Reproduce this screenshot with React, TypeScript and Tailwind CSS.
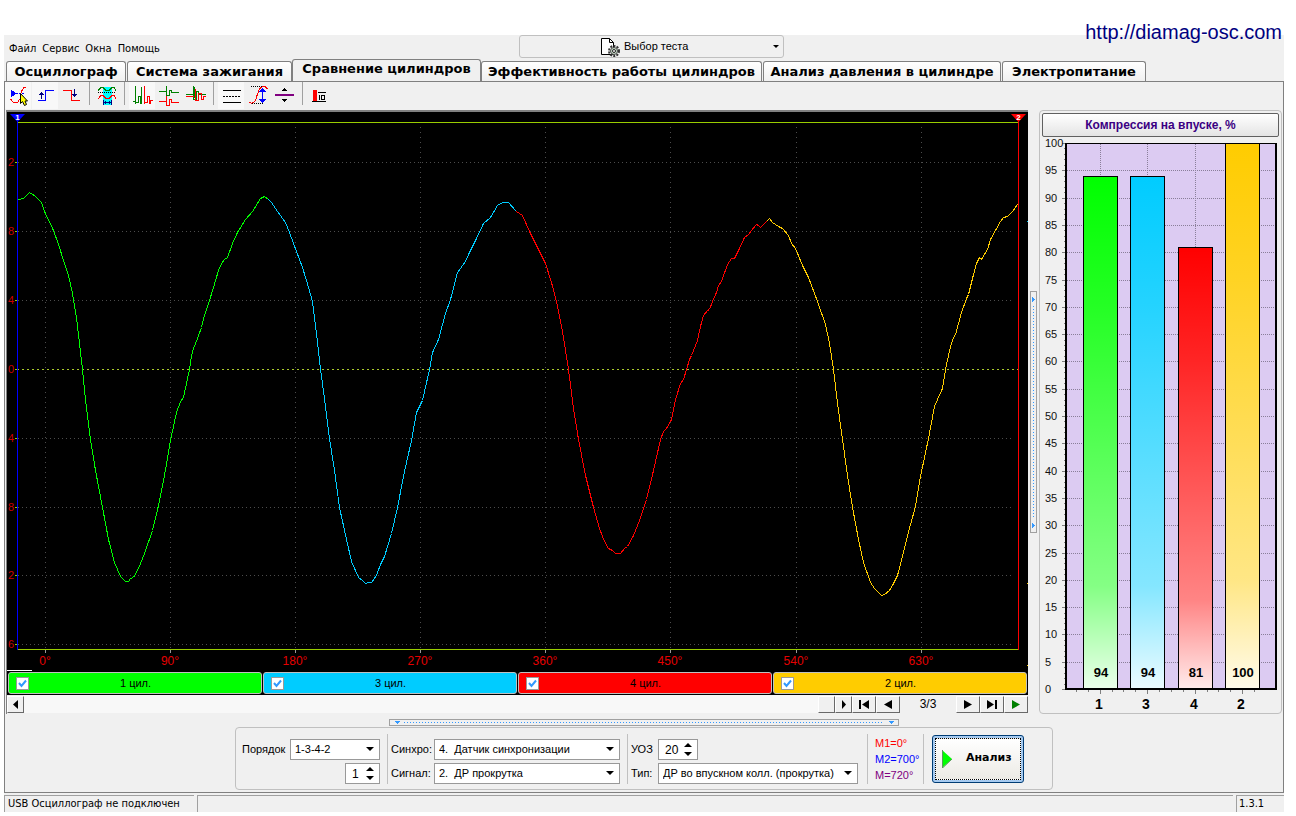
import { ReactNode } from "react"
import clsx from "clsx"

const ui = "font-['Liberation_Sans',Arial,sans-serif]"
const tahoma = "font-['DejaVu_Sans_Condensed','DejaVu_Sans',Tahoma,sans-serif]"

const menu = ["Файл", "Сервис", "Окна", "Помощь"]

const tabs = [
  { label: "Осциллограф", width: "w-[120px]" },
  { label: "Система зажигания", width: "w-[165px]" },
  { label: "Сравнение цилиндров", width: "w-[189px]", active: true },
  { label: "Эффективность работы цилиндров", width: "w-[281px]" },
  { label: "Анализ давления в цилиндре", width: "w-[238px]" },
  { label: "Электропитание", width: "w-[144px]" },
]

const cylinders = [
  { label: "1 цил.", bg: "bg-[#00ff00]" },
  { label: "3 цил.", bg: "bg-[#00ccff]" },
  { label: "4 цил.", bg: "bg-[#ff0000]" },
  { label: "2 цил.", bg: "bg-[#ffcc00]" },
]

const traces = [
  {
    color: "#00ff00",
    points:
      "18,199 23,198 29,192 32,194 34,195 41,202 44,211 53,230 58,244 64,263 68,275 72,293 76,317 79,343 82,369 85,399 90,439 95,470 102,507 108,539 114,562 120,576 123,579 125,581 128,581 130,578 133,577 138,568 144,553 152,530 158,505 164,475 170,440 176,412 180,401 183,397 189,369 191,355 193,348 197,338 201,327 204,315 209,300 213,287 218,270 221,263 224,259 227,257 232,243 237,232 245,219 252,211 260,198 264,196 268,199",
  },
  {
    color: "#00ccff",
    points:
      "268,199 271,202 277,211 285,222 289,232 296,251 302,267 306,280 312,301 316,333 320,369 324,398 329,438 334,470 339,507 346,539 351,561 358,577 362,580 365,583 368,582 371,582 376,575 380,564 384,556 391,533 397,507 404,471 411,440 416,412 422,400 429,369 432,352 438,339 445,313 450,299 457,272 465,261 468,254 475,240 483,223 490,217 497,205 502,202 508,202 516,211",
  },
  {
    color: "#ff0000",
    points:
      "516,211 522,215 529,231 536,245 545,263 551,282 556,301 562,331 568,369 573,408 578,439 585,475 593,507 599,528 604,541 608,548 612,550 615,553 620,553 624,548 627,546 633,535 639,520 646,499 653,470 660,439 663,431 666,428 671,419 675,399 680,383 683,379 689,359 691,355 697,340 700,326 703,315 707,310 709,309 712,301 716,292 718,285 721,281 727,264 731,258 734,258 739,248 744,237 748,234 751,230 756,224 758,225 760,227 766,221",
  },
  {
    color: "#ffcc00",
    points:
      "766,221 769,218 772,222 778,226 782,228 788,235 791,243 795,248 802,265 808,277 817,301 825,324 829,343 833,369 837,403 842,439 847,475 852,507 858,539 863,562 870,582 874,588 881,595 884,594 889,590 892,585 897,575 904,548 910,524 915,506 920,476 928,438 934,406 937,399 942,388 946,364 950,346 953,337 955,334 961,312 966,298 968,294 972,278 976,263 979,257 981,259 987,249 990,239 995,230 1000,221 1003,217 1007,216 1012,211 1017,204",
  },
]

const angles = [
  { x: 45, label: "0°" },
  { x: 170, label: "90°" },
  { x: 295, label: "180°" },
  { x: 420, label: "270°" },
  { x: 545, label: "360°" },
  { x: 670, label: "450°" },
  { x: 796, label: "540°" },
  { x: 921, label: "630°" },
]

const levels = [
  { y: 162, label: "2" },
  { y: 231, label: "8" },
  { y: 300, label: "4" },
  { y: 369, label: "0" },
  { y: 438, label: "4" },
  { y: 507, label: "8" },
  { y: 575, label: "2" },
  { y: 644, label: "6" },
]

function Scope() {
  return (
    <svg viewBox="7 112 1021 559" className={clsx("block w-full bg-black", ui)} role="img" aria-label="Осциллограмма">
      <g shapeRendering="crispEdges" fill="none">
        {angles.map((a) => (
          <g key={a.x}>
            <path d={`M${a.x}.5 127V649`} stroke="#4c4c4c" strokeDasharray="1 4" />
            <path d={`M${a.x}.5 650v3`} stroke="#999" />
          </g>
        ))}
        {levels.map((l) => (
          <g key={l.y}>
            {l.y === 369 ? (
              <path d="M17 369.5H1018" stroke="#a9c92a" strokeDasharray="2 3" />
            ) : (
              <path d={`M18 ${l.y}.5H1014`} stroke="#4c4c4c" strokeDasharray="1 3" />
            )}
            <path d={`M15 ${l.y}.5h2`} stroke="#99cc00" />
          </g>
        ))}
        <path d="M18 122.5H1018M18 649.5H1018" stroke="#99cc00" />
        <path d="M17.5 120V650" stroke="#0000ff" />
        {traces.map((t) => (
          <polyline key={t.color} points={t.points} stroke={t.color} transform="translate(.5 .5)" />
        ))}
        <path d="M1018.5 120V650" stroke="#ff0000" />
        <path d="M7 670.5H32" stroke="#fff" />
        <path d="M1027 221.5h1" stroke="#00ccff" />
        <path d="M1027 583.5h1M1027 665.5h1" stroke="#ffcc00" />
      </g>
      <path d="M10 114H25L17.5 122Z" fill="#0000ff" />
      <path d="M1011 114H1026L1018.5 122Z" fill="#ff0000" />
      <g fontSize="8" fontWeight="bold" fill="#fff" textAnchor="middle">
        <text x="17.5" y="120">1</text>
        <text x="1018.5" y="120">2</text>
      </g>
      <g fontSize="12" fill="#e60000" textAnchor="middle">
        {angles.map((a) => (
          <text key={a.x} x={a.x} y="665">
            {a.label}
          </text>
        ))}
      </g>
      <g fontSize="11" fill="#cc0000" textAnchor="end">
        {levels.map((l) => (
          <text key={l.y} x="14" y={l.y + 4}>
            {l.label}
          </text>
        ))}
      </g>
    </svg>
  )
}

const bars = [
  { name: "1", value: 94, x: 1083, color: "#00ff00" },
  { name: "3", value: 94, x: 1130, color: "#00ccff" },
  { name: "4", value: 81, x: 1178, color: "#ff0000" },
  { name: "2", value: 100, x: 1225, color: "#ffcc00" },
]

function CompressionChart() {
  const y = (v: number) => Math.round(689 - v * 5.46)
  const scale = Array.from({ length: 21 }, (_, i) => i * 5)
  // four minor ticks between the labelled ones
  const minor = Array.from({ length: 100 }, (_, i) => i).filter((i) => i % 5 !== 0)
  return (
    <svg viewBox="1040 137 241 576" className={clsx("block w-full", ui)} role="img" aria-label="Компрессия на впуске">
      <defs>
        {bars.map((b) => (
          <linearGradient key={b.name} id={`bar${b.name}`} x1="0" y1="0" x2="0" y2="1">
            <stop offset="0" stopColor={b.color} />
            <stop offset=".25" stopColor={b.color} stopOpacity=".86" />
            <stop offset=".8" stopColor={b.color} stopOpacity=".48" />
            <stop offset="1" stopColor={b.color} stopOpacity=".08" />
          </linearGradient>
        ))}
      </defs>
      <g shapeRendering="crispEdges" fill="none">
        <rect x="1066" y="143" width="210" height="546" fill="#dccbf2" />
        {scale.map((v) => (
          <g key={v}>
            <path d={`M1067 ${y(v)}.5H1276`} stroke="#8a7f99" strokeDasharray="1 1" />
            <path d={`M1062 ${y(v)}.5h4`} stroke="#808080" />
          </g>
        ))}
        {minor.map((v) => (
          <path key={v} d={`M1064 ${y(v)}.5h1`} stroke="#808080" />
        ))}
        {bars.map((b) => (
          <g key={b.name}>
            <path d={`M${b.x + 17}.5 144V689`} stroke="#8a7f99" strokeDasharray="1 1" />
            <path d={`M${b.x + 17}.5 690v4`} stroke="#808080" />
            <path d={`M${b.x + 5}.5 690v2M${b.x + 29}.5 690v2M${b.x - 7}.5 690v2`} stroke="#808080" />
          </g>
        ))}
        <path d="M1066 143V690M1276 143V690" stroke="#000" strokeWidth="2" />
        <path d="M1065 143.5H1277" stroke="#000" />
        {bars.map((b) => (
          <g key={b.name}>
            <rect x={b.x} y={y(b.value)} width="35" height={689 - y(b.value)} fill="#fff" />
            <rect x={b.x + 0.5} y={y(b.value) + 0.5} width="34" height={688 - y(b.value)} fill={`url(#bar${b.name})`} stroke="#000" />
          </g>
        ))}
        <path d="M1065 689H1277" stroke="#000" strokeWidth="2" />
      </g>
      <g fontSize="11" fill="#111">
        {scale.map((v) => (
          <text key={v} x="1045" y={y(v) + 4}>
            {v}
          </text>
        ))}
      </g>
      <g fontWeight="bold" textAnchor="middle" fill="#000">
        {bars.map((b) => (
          <g key={b.name}>
            <text x={b.x + 18} y="677" fontSize="13">
              {b.value}
            </text>
            <text x={b.x + 16} y="709" fontSize="14">
              {b.name}
            </text>
          </g>
        ))}
      </g>
    </svg>
  )
}

function ToolButton({ label, pressed, children }: { label: string; pressed?: boolean; children: ReactNode }) {
  return (
    <button aria-label={label} aria-pressed={!!pressed} className={clsx("h-[27px] w-[26px]", pressed && "bg-[#f8f8f8]")}>
      <svg viewBox="0 0 26 27" className="block h-[27px] w-[26px]" fill="none" shapeRendering="crispEdges">
        {children}
      </svg>
    </button>
  )
}

function ToolSeparator() {
  return <div className="mx-[3px] h-[23px] w-px bg-[#a0a0a0]" />
}

function Toolbar() {
  return (
    <div className="flex h-7 items-start gap-px">
      <ToolButton label="Курсор" pressed>
        <path d="M6 7.5L11 11.5L6 15.5Z" fill="#0000ff" />
        <path d="M11 11.5H20" stroke="#0000ff" strokeWidth="1.5" strokeDasharray="2 1" />
        <path d="M5.5 17L8.5 20.5H12.5L14.5 17.5M15 13L16.5 9.500L18.5 6L21 5.5" stroke="#ff0000" />
        <path d="M15.5 11.5V21.5L17.5 19.5L19.5 23.5L21.5 22.5L20 19H22.5Z" fill="#ffff00" stroke="#000" shapeRendering="auto" />
      </ToolButton>
      <ToolButton label="Фронт" pressed>
        <path d="M6 18.5H13.5V8.5H22" stroke="#0000ff" />
        <path d="M9.5 10V17" stroke="#000080" />
        <path d="M6.5 13L9.5 9.5L12.5 13Z" fill="#000080" />
      </ToolButton>
      <ToolButton label="Спад">
        <path d="M4 8.5H12.5V18.5H21" stroke="#ff0000" />
        <path d="M15.5 7V13" stroke="#000080" />
        <path d="M12.5 12L15.5 15.5L18.5 12Z" fill="#000080" />
      </ToolButton>
      <ToolSeparator />
      <ToolButton label="Синхронизация">
        <path d="M9 5H18V23H9Z" fill="#00ffff" />
        <path d="M4 8.5L7 5.5H9L12 8.5H15L18 5.5H20L22 8.5" stroke="#008000" />
        <path d="M4 10.5H22" stroke="#000" strokeDasharray="1 1" />
        <path d="M4 17L7 13.5H9L12 16.5H15L18 13.5H20L22 17" stroke="#ff0000" />
        <path d="M9.5 18V23M17.5 18V23M10 20.5H17" stroke="#000080" />
        <path d="M10 20.5L12 18.5V22.5ZM17 20.5L15 18.5V22.5Z" fill="#000080" />
      </ToolButton>
      <ToolSeparator />
      <ToolButton label="Последовательно" pressed>
        <path d="M4 19.5H6.5M6.500 4V22M7 20.500H9.500V14.500H11.500V21.500H12.500V4.500" stroke="#008000" />
        <path d="M15.500 4V22M16 20.500H18.500V14.500H20.500V21.500H21.500V18.500H24" stroke="#ff0000" />
      </ToolButton>
      <ToolButton label="По вертикали">
        <path d="M3 9.5H10.5V4V13.5H13.5V8.5H15.5V10.5H23" stroke="#008000" />
        <path d="M3 19.5H10.5V14V23.5H13.5V17.5H15.5V20.5H23" stroke="#ff0000" />
      </ToolButton>
      <ToolButton label="Наложение">
        <path d="M3 12.5H10.5V4V17.5H13.5V9.5H15.5V12.5H23" stroke="#008000" />
        <path d="M3 14.5H12.5V7V18.5H15.5V11.5H18.5V17.5H20.5V14.5H23" stroke="#ff0000" />
        <path d="M11.5 5V16" stroke="#008000" />
      </ToolButton>
      <ToolSeparator />
      <ToolButton label="Линии" pressed>
        <path d="M5 8.5H23M5 20.5H23" stroke="#000" />
        <path d="M5 14.5H23" stroke="#000" strokeDasharray="2 1" />
      </ToolButton>
      <ToolButton label="Размах">
        <path d="M4 20L7 21.5L10.5 18.5L12.5 12L14.5 7L17 4.5H20L22.5 7" stroke="#ff0000" />
        <path d="M6 4.5H17M7 21.5H19" stroke="#000" strokeDasharray="1 1" />
        <path d="M17.5 8V19" stroke="#0000ff" />
        <path d="M14 10L17.5 6L21 10ZM14 17L17.5 21L21 17Z" fill="#0000ff" />
      </ToolButton>
      <ToolButton label="Центр">
        <path d="M3 12H22V14H3Z" fill="#800080" />
        <path d="M10 9L12.5 6L15 9ZM10 17L12.5 20L15 17Z" fill="#000" />
      </ToolButton>
      <ToolSeparator />
      <ToolButton label="Среднее">
        <path d="M6 8H10V19H6Z" fill="#ff0000" />
        <path d="M11 10.5H19M5 19.5H19" stroke="#000" />
        <path d="M12.5 13V18M14.5 13.5H17.5V17.5H14.5Z" stroke="#000" />
      </ToolButton>
    </div>
  )
}

function NavButton({ label, color = "fill-black", d, width = "w-6" }: { label: string; color?: string; d: string; width?: string }) {
  return (
    <button
      aria-label={label}
      className={clsx("flex h-[17px] items-center justify-center border border-t-white border-l-white border-r-[#696969] border-b-[#696969] bg-[#f0f0f0]", width)}
    >
      <svg viewBox="0 0 12 9" className={clsx("h-[9px] w-3", color)}>
        <path d={d} />
      </svg>
    </button>
  )
}

function Pager() {
  return (
    <div className="flex h-[18px] items-center bg-[#f0f0f0]">
      <NavButton label="Прокрутить влево" width="w-[17px]" d="M8 0V9L3 4.5Z" />
      <div className="flex-1 self-stretch bg-[#f8f8f8]" />
      <NavButton label="Ползунок" width="w-[17px]" d="" />
      <NavButton label="Прокрутить вправо" width="w-[17px]" d="M4 0V9L8 4.5Z" />
      <NavButton label="Первая" d="M1 0H3V9H1ZM11 0V9L4 4.5Z" />
      <NavButton label="Предыдущая" d="M10 0V9L2 4.5Z" />
      <span className={clsx("w-14 text-center text-xs", ui)}>3/3</span>
      <NavButton label="Следующая" d="M2 0V9L10 4.5Z" />
      <NavButton label="Последняя" d="M1 0V9L8 4.5ZM9 0H11V9H9Z" />
      <NavButton label="Пуск" color="fill-[#008000]" d="M2 0V9L10 4.5Z" />
    </div>
  )
}

function Check({ label, bg }: { label: string; bg: string }) {
  return (
    <label className={clsx("flex h-[22px] items-center rounded-[3px] border border-[#c0c0c0] px-[7px] text-[11px] text-black", bg)}>
      <span className="relative block size-[13px]">
        <input type="checkbox" defaultChecked className="peer block size-[13px] appearance-none border border-[#9a9a9a] bg-white" />
        <svg viewBox="0 0 13 13" className="pointer-events-none absolute inset-0 hidden peer-checked:block" fill="none" stroke="#3399ff" strokeWidth="2">
          <path d="M3 6L5.5 9L10 3.5" />
        </svg>
      </span>
      <span className="flex-1 pr-3 text-center">{label}</span>
    </label>
  )
}

function Select({ id, value, width }: { id: string; value: string; width: string }) {
  return (
    <div className={clsx("relative", width)}>
      <select id={id} className="block h-[21px] w-full appearance-none border border-[#999] bg-white pr-5 pl-1 text-[11px] text-black">
        <option>{value}</option>
      </select>
      <svg viewBox="0 0 8 4" className="pointer-events-none absolute top-2 right-1.5 h-1 w-2">
        <path d="M0 0H8L4 4Z" />
      </svg>
    </div>
  )
}

function Spin({ id, value, width, label }: { id: string; value: string; width: string; label?: string }) {
  return (
    <div className={clsx("relative", width)}>
      <input id={id} aria-label={label} defaultValue={value} className="block h-[21px] w-full border border-[#999] bg-white pl-1.5 text-xs text-black" />
      <svg viewBox="0 0 8 13" className="pointer-events-none absolute top-1 right-1.5 h-[13px] w-2">
        <path d="M0 4L4 0L8 4ZM0 9H8L4 13Z" />
      </svg>
    </div>
  )
}

function Divider() {
  return <div className="h-[50px] w-px bg-[#c0c0c0]" />
}

function Controls() {
  return (
    <section className={clsx("mx-auto mt-px flex h-[63px] w-[818px] shrink-0 items-center rounded-[4px] border border-[#c0c0c0] pl-1.5 text-[11px]", ui)}>
      <div className="grid w-[139px] grid-cols-[48px_90px] gap-y-[3px] pt-1.5">
        <label htmlFor="order" className="self-center">Порядок</label>
        <Select id="order" value="1-3-4-2" width="w-[90px]" />
        <div className="col-start-2 flex justify-end">
          <Spin id="first" label="Первый цилиндр" value="1" width="w-[35px]" />
        </div>
      </div>
      <div className="ml-1.5">
        <Divider />
      </div>
      <div className="ml-[3px] grid grid-cols-[43px_186px] gap-y-[3px] pt-1.5">
        <label htmlFor="sync" className="self-center">Синхро:</label>
        <Select id="sync" value={"4.\u00a0\u00a0Датчик синхронизации"} width="w-full" />
        <label htmlFor="signal" className="self-center">Сигнал:</label>
        <Select id="signal" value={"2.\u00a0\u00a0ДР прокрутка"} width="w-full" />
      </div>
      <div className="ml-[7px]">
        <Divider />
      </div>
      <div className="ml-[3px] grid grid-cols-[27px_200px] gap-y-[3px] pt-1.5">
        <label htmlFor="advance" className="self-center">УОЗ</label>
        <Spin id="advance" value="20" width="w-10" />
        <label htmlFor="kind" className="self-center">Тип:</label>
        <Select id="kind" value="ДР во впускном колл. (прокрутка)" width="w-full" />
      </div>
      <div className="ml-[9px]">
        <Divider />
      </div>
      <div className="ml-[7px] w-12 text-[11px] leading-4">
        <p className="text-[#ff0000]">M1=0°</p>
        <p className="text-[#0000ff]">M2=700°</p>
        <p className="text-[#800080]">M=720°</p>
      </div>
      <Divider />
      <button className="ml-2 h-12 w-[92px] rounded-[3px] border border-[#003c74] bg-[#a6caf0] p-0.5">
        <span className="flex h-full items-center gap-3.5 border border-dotted border-black bg-linear-to-b from-white to-[#ecebe5] pl-1.5 text-[11px] font-bold font-['DejaVu_Sans',sans-serif]">
          <svg viewBox="0 0 10 18" className="h-[18px] w-2.5">
            <path d="M0 0L10 9L0 18Z" fill="#00ff00" />
            <path d="M.5 0V18L10 9" fill="none" stroke="#5a9a5a" />
          </svg>
          Анализ
        </span>
      </button>
    </section>
  )
}

export default function App() {
  return (
    <div className="relative min-h-screen bg-white pt-[35px] pr-3 pl-1 text-black">
      <a href="http://diamag-osc.com" className={clsx("absolute top-5 right-3.5 text-xl leading-6 text-[#000080]", ui)}>
        http://diamag-osc.com
      </a>
      <div className="flex flex-col bg-[#f0f0f0]">
        <header className="flex h-6 items-start">
          <nav className={clsx("flex w-[515px] gap-1.5 pt-1.5 pl-[5px] text-[11px] leading-4", tahoma)}>
            {menu.map((m) => (
              <button key={m}>{m}</button>
            ))}
          </nav>
          <button className={clsx("flex h-[23px] w-[265px] items-center rounded-[3px] border border-[#c0c0c0] pr-1 pl-20 text-[11px]", ui)}>
            <svg viewBox="0 0 20 20" className="size-5" fill="none">
              <path d="M1.5 1.5H9.5L13.5 5.5V17.5H1.5Z" fill="#fff" stroke="#000" />
              <path d="M9.5 1.5V5.5H13.5" stroke="#000" />
              <circle cx="14" cy="14" r="5" stroke="#333" strokeWidth="2" strokeDasharray="2 1.2" />
              <circle cx="14" cy="14" r="3.5" fill="#c9dcc9" stroke="#444" />
              <circle cx="14" cy="14" r="1.5" fill="#fff" stroke="#222" />
            </svg>
            <span className="ml-1">Выбор теста</span>
            <svg viewBox="0 0 6 3" className="ml-auto h-[3px] w-1.5">
              <path d="M0 0H6L3 3Z" />
            </svg>
          </button>
        </header>

        {/* Tabs */}
        <div role="tablist" className="flex h-[22px] items-end gap-px pl-0.5 text-[13px] font-bold font-['DejaVu_Sans',Verdana,sans-serif]">
          {tabs.map((t) => (
            <button
              key={t.label}
              role="tab"
              aria-selected={!!t.active}
              className={clsx(
                "shrink-0 rounded-t-[3px] border border-b-0 border-[#808080] leading-4 whitespace-nowrap",
                t.width,
                t.active ? "-mx-px -mb-px h-[23px] bg-[#f0f0f0] pb-1" : "h-5 bg-linear-to-b from-white to-[#f0f0f0]"
              )}
            >
              {t.label}
            </button>
          ))}
        </div>

        <main className="flex h-[712px] flex-col border border-[#808080]">
          <Toolbar />
          <div className="flex px-px">
            <section className="min-w-0 flex-1 border-t-2 border-l border-[#808080]">
              <Scope />
              <div className={clsx("grid grid-cols-4 gap-px bg-black p-px", ui)}>
                {cylinders.map((c) => (
                  <Check key={c.label} {...c} />
                ))}
              </div>
              <Pager />
            </section>

            {/* Vertical splitter */}
            <div className="flex w-[11px] items-center justify-center">
              <svg viewBox="0 0 7 242" className="h-[242px] w-[7px]" fill="none" shapeRendering="crispEdges">
                <path d="M.5 .5H6.5V241.5H.5Z" stroke="#a0a0a0" />
                <path d="M3.5 15V228" stroke="#3399ff" strokeDasharray="1 2" />
                <path d="M2 6L5 8.5L2 11ZM2 232L5 234.5L2 237Z" fill="#3399ff" />
              </svg>
            </div>

            <section className="w-[243px] self-start rounded-[4px] border border-[#c0c0c0]">
              <button className={clsx("mx-0.5 mt-0.5 block h-6 w-[237px] rounded-[2px] border border-[#606060] bg-linear-to-b from-white to-[#e4e4e4] text-xs font-bold text-[#3b0083]", ui)}>
                Компрессия на впуске, %
              </button>
              <CompressionChart />
            </section>
          </div>

          {/* Horizontal splitter */}
          <svg viewBox="0 0 510 7" className="mx-auto mt-[5px] h-[7px] w-[510px] shrink-0" fill="none" shapeRendering="crispEdges">
            <path d="M.5 .5H509.5V6.5H.5Z" stroke="#a0a0a0" />
            <path d="M15 3.5H494" stroke="#3399ff" strokeDasharray="1 2" />
            <path d="M6 2H11L8.5 5ZM500 2H505L502.5 5Z" fill="#3399ff" />
          </svg>
          <Controls />
        </main>

        <footer className={clsx("mt-0.5 flex h-[17px] gap-[3px] text-[11px] leading-4", tahoma)}>
          <div className="w-[190px] border-t border-l border-[#a0a0a0] pl-[3px]">USB Осциллограф не подключен</div>
          <div className="flex-1 border-t border-l border-[#a0a0a0]" />
          <div className="w-12 border-t border-l border-[#a0a0a0] pl-0.5">1.3.1</div>
        </footer>
      </div>
    </div>
  )
}
